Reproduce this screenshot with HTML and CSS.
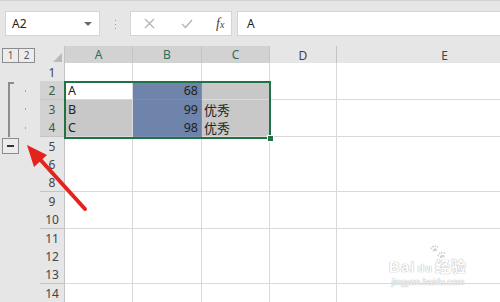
FILE: index.html
```html
<!DOCTYPE html>
<html lang="zh-CN">

<head>
    <meta charset="UTF-8">
    <title>分级显示</title>
    <link rel="stylesheet" href="styles.css">
</head>

<body>
    <!-- Formula bar -->
    <div class="toolbar">
        <div class="name-box"><span>A2</span><span class="drop"></span></div>
        <div class="grip"><i></i><i></i><i></i></div>
        <div class="fx-box">
            <svg class="ico" width="11" height="11" viewBox="0 0 11 11"><path d="M1 1L10 10M10 1L1 10" stroke="#b4b4b4" stroke-width="1.3" fill="none"/></svg>
            <svg class="ico" width="12" height="10" viewBox="0 0 12 10"><path d="M1 5L4.5 8.5L11 1" stroke="#b4b4b4" stroke-width="1.4" fill="none"/></svg>
            <span class="fx">f<small>x</small></span>
        </div>
        <div class="formula">A</div>
    </div>

    <!-- Sheet -->
    <div class="sheet">
        <div class="row head">
            <div class="ol"><span class="lvl">1</span><span class="lvl">2</span></div>
            <div class="rh corner"><span class="tri"></span></div>
            <div class="ch sel">A</div>
            <div class="ch sel">B</div>
            <div class="ch sel">C</div>
            <div class="ch">D</div>
            <div class="ch">E</div>
        </div>
        <div class="row">
            <div class="ol"></div>
            <div class="rh">1</div>
            <div class="c"></div><div class="c"></div><div class="c"></div><div class="c"></div><div class="c"></div>
        </div>
        <div class="row">
            <div class="ol"><span class="bar top"><i class="dot"></i></span></div>
            <div class="rh sel">2</div>
            <div class="c">A</div><div class="c blue num">68</div><div class="c gray"></div><div class="c"></div><div class="c"></div>
        </div>
        <div class="row">
            <div class="ol"><span class="bar"><i class="dot"></i></span></div>
            <div class="rh sel">3</div>
            <div class="c gray">B</div><div class="c blue num">99</div><div class="c gray cn">优秀</div><div class="c"></div><div class="c"></div>
        </div>
        <div class="row">
            <div class="ol"><span class="bar"><i class="dot"></i></span></div>
            <div class="rh sel">4</div>
            <div class="c gray">C</div><div class="c blue num">98</div><div class="c gray cn">优秀</div><div class="c"></div><div class="c"></div>
        </div>
        <div class="row">
            <div class="ol"><span class="minus"><i></i></span></div>
            <div class="rh">5</div>
            <div class="c"></div><div class="c"></div><div class="c"></div><div class="c"></div><div class="c"></div>
        </div>
        <div class="row">
            <div class="ol"></div>
            <div class="rh hid">6</div>
            <div class="c"></div><div class="c"></div><div class="c"></div><div class="c"></div><div class="c"></div>
        </div>
        <div class="row">
            <div class="ol"></div>
            <div class="rh">8</div>
            <div class="c"></div><div class="c"></div><div class="c"></div><div class="c"></div><div class="c"></div>
        </div>
        <div class="row">
            <div class="ol"></div>
            <div class="rh">9</div>
            <div class="c"></div><div class="c"></div><div class="c"></div><div class="c"></div><div class="c"></div>
        </div>
        <div class="row">
            <div class="ol"></div>
            <div class="rh">10</div>
            <div class="c"></div><div class="c"></div><div class="c"></div><div class="c"></div><div class="c"></div>
        </div>
        <div class="row">
            <div class="ol"></div>
            <div class="rh">11</div>
            <div class="c"></div><div class="c"></div><div class="c"></div><div class="c"></div><div class="c"></div>
        </div>
        <div class="row">
            <div class="ol"></div>
            <div class="rh">12</div>
            <div class="c"></div><div class="c"></div><div class="c"></div><div class="c"></div><div class="c"></div>
        </div>
        <div class="row">
            <div class="ol"></div>
            <div class="rh">13</div>
            <div class="c"></div><div class="c"></div><div class="c"></div><div class="c"></div><div class="c"></div>
        </div>
        <div class="row">
            <div class="ol"></div>
            <div class="rh">14</div>
            <div class="c"></div><div class="c"></div><div class="c"></div><div class="c"></div><div class="c"></div>
        </div>

        <!-- selection box over A2:C4 -->
        <div class="selection"><span class="handle"></span></div>
    </div>

    <!-- watermark -->
    <div class="watermark">
        <div class="wm-top"><span class="paw">🐾</span></div>
        <div class="wm-mid">Bai<span class="du">du</span>经验</div>
        <div class="wm-url">jingyan.baidu.com</div>
    </div>

    <!-- red arrow annotation -->
    <svg class="arrow" width="500" height="302" viewBox="0 0 500 302">
        <line x1="85" y1="209" x2="37" y2="156" stroke="#e5231d" stroke-width="4" stroke-linecap="round"/>
        <polygon points="27,145 47,155 34,167" fill="#e5231d"/>
    </svg>
</body>

</html>
```

FILE: styles.css
```css
:root {
    --bar-bg: #e6e6e6;
    --line: #d9d9d9;
    --head-line: #c4c4c4;
    --green: #217346;
    --sel-gray: #c8c8c8;
    --sel-blue: #6f84aa;
    --sel-head: #d2d2d2;
}

* {
    margin: 0;
    padding: 0;
    box-sizing: border-box;
}

body {
    width: 500px;
    height: 302px;
    overflow: hidden;
    background: var(--bar-bg);
    font-family: "Noto Sans", "Liberation Sans", "Noto Sans CJK SC", sans-serif;
    color: #333;
    position: relative;
}

/* Formula bar */
.toolbar {
    height: 46px;
    display: flex;
    align-items: flex-start;
    padding: 11px 0 0 5px;
    border-top: 1px solid #d2d2d2;
}

.name-box,
.fx-box,
.formula {
    height: 25px;
    background: #fff;
    border: 1px solid #d4d4d4;
    display: flex;
    align-items: center;
    margin-top: -1px;
}

.name-box {
    width: 95px;
    justify-content: space-between;
    padding: 0 7px 0 6px;
    font-size: 12px;
    color: #222;
}

.drop {
    width: 0;
    height: 0;
    border-left: 4px solid transparent;
    border-right: 4px solid transparent;
    border-top: 4px solid #6a6a6a;
}

.grip {
    width: 30px;
    height: 25px;
    display: flex;
    flex-direction: column;
    align-items: center;
    justify-content: center;
    gap: 3px;
}

.grip i {
    display: block;
    width: 1px;
    height: 1px;
    background: #9a9a9a;
}

.fx-box {
    width: 102px;
    padding-left: 13px;
    gap: 0;
}

.fx-box .ico {
    margin-right: 26px;
}

.fx {
    font-family: "Liberation Serif", serif;
    font-style: italic;
    font-size: 14px;
    color: #444;
    margin-left: -3px;
}

.fx small {
    font-size: 10px;
}

.formula {
    flex: 1;
    margin-left: 5px;
    border-right: none;
    padding-left: 9px;
    font-size: 12px;
    color: #222;
}

/* Sheet */
.sheet {
    position: relative;
}

.row {
    display: grid;
    grid-template-columns: 40px 25px 68px 69px 68px 67px 216px;
    height: 18.4px;
    overflow: hidden;
}

.row.head {
    height: 17px;
}

.ol {
    display: flex;
    align-items: stretch;
    padding-left: 2px;
}

.lvl {
    width: 17px;
    height: 15px;
    margin-top: 2px;
    border: 1px solid #8c8c8c;
    font-size: 10px;
    line-height: 13px;
    text-align: center;
    color: #555;
    background: #ececec;
}

.lvl + .lvl {
    margin-left: -1px;
}

.bar {
    display: flex;
    align-items: center;
    margin-left: 6px;
    width: 18px;
    border-left: 2px solid #8c8c8c;
    position: relative;
}

.bar.top {
    margin-top: 1px;
}

.bar.top::before {
    content: "";
    position: absolute;
    left: 0;
    top: 0;
    width: 4px;
    height: 2px;
    background: #8c8c8c;
}

.dot {
    display: block;
    width: 2px;
    height: 2px;
    background: #a6a6a6;
    margin-left: 15px;
}

.minus {
    width: 17px;
    height: 16px;
    margin-top: 1px;
    border: 1px solid #8c8c8c;
    background: #ececec;
    display: flex;
    align-items: center;
    justify-content: center;
}

.minus i {
    display: block;
    width: 7px;
    height: 2px;
    background: #333;
}

.rh,
.ch {
    background: var(--bar-bg);
    font-size: 12px;
    color: #444;
    display: flex;
    align-items: center;
    justify-content: center;
}

.rh {
    border-right: 1px solid var(--head-line);
    border-bottom: 1px solid var(--head-line);
    padding-top: 1px;
}

.rh.sel {
    background: var(--sel-head);
    color: #2f5f48;
}

.rh.hid {
    border-bottom: 2px solid #b4b4b4;
}

.ch {
    border-right: 1px solid var(--head-line);
    border-bottom: 1px solid #a8a8a8;
}

.ch.sel {
    background: var(--sel-head);
    color: #2b6e57;
    border-bottom: 2px solid var(--green);
}

.corner {
    align-items: flex-end;
    justify-content: flex-end;
    padding: 0 2px 2px 0;
    border-bottom: 1px solid #a8a8a8;
}

.tri {
    width: 0;
    height: 0;
    border-left: 9px solid transparent;
    border-bottom: 9px solid #b9b9b9;
}

.c {
    background: #fff;
    border-right: 1px solid var(--line);
    border-bottom: 1px solid var(--line);
    font-size: 12.5px;
    color: #222;
    display: flex;
    align-items: flex-end;
    padding: 0 3px 0 3px;
    line-height: 17px;
}

.c.gray {
    background: var(--sel-gray);
    border-color: #dcdcdc;
}

.c.blue {
    background: var(--sel-blue);
    border-color: #7a8db0;
}

.num {
    justify-content: flex-end;
}

.cn {
    font-family: "Noto Sans CJK SC", sans-serif;
    font-size: 13px;
    padding-left: 2px;
}

/* selection frame */
.selection {
    position: absolute;
    left: 64px;
    top: 35px;
    width: 207px;
    height: 58px;
    border: 2px solid var(--green);
}

.handle {
    position: absolute;
    right: -5px;
    bottom: -5px;
    width: 7px;
    height: 7px;
    background: var(--green);
    border: 1px solid #fff;
}

/* watermark */
.watermark {
    position: absolute;
    left: 382px;
    top: 244px;
    width: 92px;
    color: #fff;
    text-shadow: 0 0 1px #a9a9a9, 0 0 1px #b9b9b9;
    text-align: center;
    font-family: "Liberation Sans", "Noto Sans CJK SC", sans-serif;
}

.wm-top {
    height: 14px;
    font-size: 14px;
    line-height: 14px;
    padding-left: 18px;
    opacity: .5;
    filter: grayscale(1) brightness(1.8);
}

.wm-mid {
    font-size: 15px;
    font-weight: bold;
    line-height: 18px;
    letter-spacing: 1px;
}

.du {
    font-size: 11px;
    margin: 0 2px;
}

.wm-url {
    font-size: 9px;
    line-height: 10px;
}

.arrow {
    position: absolute;
    left: 0;
    top: 0;
    pointer-events: none;
}
```
